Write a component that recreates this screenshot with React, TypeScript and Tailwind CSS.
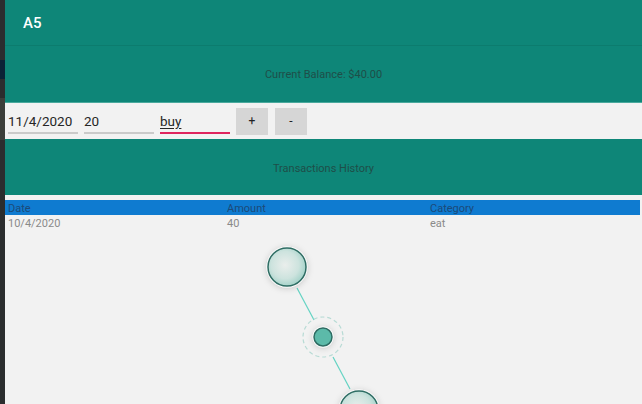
export default function App() {
    const font = { fontFamily: "Roboto, 'Noto Sans', sans-serif" }
    return (
        <div className="flex h-[404px] w-[642px] overflow-hidden bg-[#f2f2f2]" style={font}>
            {/* strip of the window behind */}
            <div className="flex w-[5px] shrink-0 flex-col bg-[#2b2d2e]">
                <div className="h-[60px] shrink-0" />
                <div className="h-[19px] shrink-0 bg-[#0b2236]" />
                <div className="h-[19px] shrink-0" />
                <div className="h-[42px] shrink-0 bg-[#3b3e3a]" />
            </div>

            <div className="flex min-w-0 flex-1 flex-col">
                <div className="flex h-[46px] shrink-0 items-center border-b border-[#0c7c6e] bg-[#0e8678] px-[18px] pt-[1px]">
                    <span className="text-[15px] font-medium text-white">A5</span>
                </div>
                <div className="flex h-[57px] shrink-0 items-center justify-center bg-[#0e8678] border-b border-[#4aa99d] pt-[3px]">
                    <p className="text-[11px] text-[#1f4e48]">Current Balance: $40.00</p>
                </div>

                <div className="flex h-[36px] shrink-0 items-center gap-[6px] px-[3px]">
                    <div className="w-[70px] border-b-2 border-[#cacaca] pt-[3px] pb-[1px] text-[13.5px] text-[#262626]">11/4/2020</div>
                    <div className="w-[70px] border-b-2 border-[#cacaca] pt-[3px] pb-[1px] text-[13.5px] text-[#262626]">20</div>
                    <div className="w-[70px] border-b-2 border-[#e0245e] pt-[3px] pb-[1px] text-[13.5px] text-[#262626]">
                        <span className="underline decoration-[#262626] underline-offset-2">buy</span>
                    </div>
                    <div className="flex gap-[7px]">
                        <button className="flex h-[27px] w-[32px] items-center justify-center bg-[#d6d6d6] text-[12px] text-[#222]">+</button>
                        <button className="flex h-[27px] w-[32px] items-center justify-center bg-[#d6d6d6] text-[12px] text-[#222]">-</button>
                    </div>
                </div>

                <div className="flex h-[56px] shrink-0 items-center justify-center bg-[#0e8678] pt-[5px]">
                    <p className="text-[11px] text-[#1f4e48]">Transactions History</p>
                </div>

                <div className="mt-[5px] mr-[2px] shrink-0">
                    <div className="grid h-[15px] grid-cols-[219px_203px_1fr] items-center bg-[#0f7bd0] pl-[3px] pt-[1px] text-[11px] text-[#1c4a78]">
                        <span>Date</span>
                        <span>Amount</span>
                        <span>Category</span>
                    </div>
                    <div className="grid h-[15px] grid-cols-[219px_203px_1fr] items-center pl-[3px] pt-[1px] text-[11px] text-[#8a8a8a]">
                        <span>10/4/2020</span>
                        <span>40</span>
                        <span>eat</span>
                    </div>
                </div>

                <svg width="637" height="175" className="shrink-0">
                    <defs>
                        <radialGradient id="big" cx="45%" cy="45%" r="60%">
                            <stop offset="0%" stopColor="#eaeeec" />
                            <stop offset="60%" stopColor="#cde3de" />
                            <stop offset="100%" stopColor="#9ccfc5" />
                        </radialGradient>
                        <filter id="sh" x="-50%" y="-50%" width="200%" height="200%">
                            <feDropShadow dx="0" dy="1" stdDeviation="3" floodColor="#000" floodOpacity="0.18" />
                        </filter>
                    </defs>
                    <line x1="292" y1="58" x2="309" y2="90" stroke="#64d3c3" strokeWidth="1.2" />
                    <line x1="328" y1="127" x2="345" y2="159" stroke="#64d3c3" strokeWidth="1.2" />

                    <g filter="url(#sh)">
                        <circle cx="282" cy="37" r="20.5" fill="#fff" />
                        <circle cx="282" cy="37" r="19" fill="url(#big)" stroke="#2e6c63" strokeWidth="1.5" />
                    </g>

                    <circle cx="318" cy="107" r="20" fill="none" stroke="#b8dbd5" strokeWidth="1.2" strokeDasharray="4 3" />
                    <g filter="url(#sh)">
                        <circle cx="318" cy="107" r="10.5" fill="#fff" />
                        <circle cx="318" cy="107" r="9" fill="#5bbaa9" stroke="#2e6c63" strokeWidth="1.5" />
                    </g>

                    <g filter="url(#sh)">
                        <circle cx="354" cy="180" r="20.5" fill="#fff" />
                        <circle cx="354" cy="180" r="19" fill="url(#big)" stroke="#2e6c63" strokeWidth="1.5" />
                    </g>
                </svg>
            </div>
        </div>
    )
}
